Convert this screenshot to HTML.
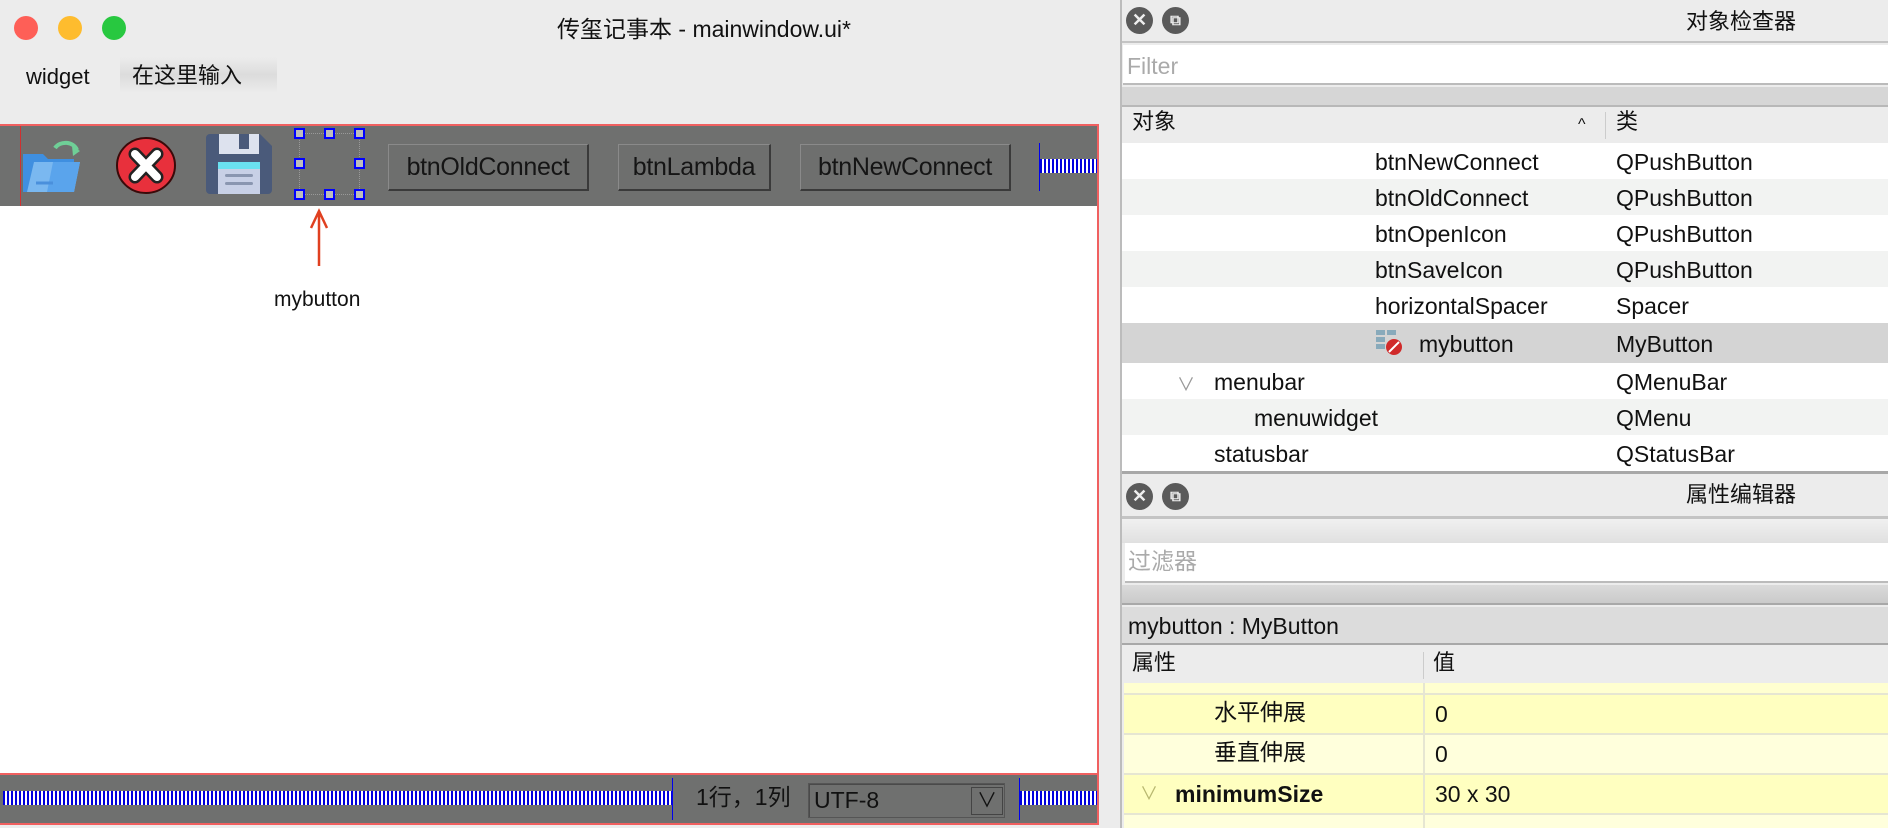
<!DOCTYPE html>
<html><head><meta charset="utf-8"><style>
*{margin:0;padding:0;box-sizing:border-box}
body{width:1888px;height:828px;overflow:hidden;background:#ececec;font-family:"Liberation Sans","Noto Sans CJK SC",sans-serif;color:#111;position:relative}
.a{position:absolute}
.t{position:absolute;font-size:22px;line-height:1;white-space:nowrap}
.btn{position:absolute;top:144px;height:47px;background:#6e6f6e;border-top:1px solid #8a8a8a;border-left:1px solid #8a8a8a;border-right:2px solid #3a3a3a;border-bottom:2px solid #3a3a3a;font-size:25px;display:flex;align-items:center;justify-content:center;color:#151515;letter-spacing:-0.3px}
.h{position:absolute;width:11px;height:11px;background:#bdbdbd;border:2px solid #0000ff}
.spr{position:absolute;height:14px;background:repeating-linear-gradient(90deg,#0000dd 0 2px,#fff 2px 4px)}
.row{position:absolute;left:1122px;width:766px;height:36px}
.row .n{position:absolute;font-size:23px;top:6px}
.row .c{position:absolute;left:494px;font-size:23px;top:6px}
.yr{position:absolute;left:1124px;width:764px;border-bottom:2px solid #e6e6d2}
.yr .n{position:absolute;font-size:23px;top:8px;line-height:1}
.yr .cj{position:absolute;font-size:23px;top:6px;line-height:1}
.yr .c{position:absolute;left:311px;font-size:23px;top:8px;line-height:1}
.ic{position:absolute;width:27px;height:27px;border-radius:50%;background:#5a5a5a;color:#eee;font-size:18px;font-weight:bold;display:flex;align-items:center;justify-content:center}
</style></head><body>
<div class="a" style="left:14px;top:16px;width:24px;height:24px;border-radius:50%;background:#fe5f57"></div>
<div class="a" style="left:58px;top:16px;width:24px;height:24px;border-radius:50%;background:#febc2e"></div>
<div class="a" style="left:102px;top:16px;width:24px;height:24px;border-radius:50%;background:#28c840"></div>
<div class="t" style="left:557px;top:18px;font-size:23px">传玺记事本 - mainwindow.ui*</div>
<div class="t" style="left:26px;top:66px">widget</div>
<div class="a" style="left:120px;top:57px;width:157px;height:36px;background:linear-gradient(#ececec,#dcdcdc 50%,#ececec)"></div>
<div class="t" style="left:132px;top:65px">在这里输入</div>
<div class="a" style="left:0;top:124px;width:1099px;height:2px;background:#f06060"></div>
<div class="a" style="left:0;top:126px;width:1098px;height:80px;background:#6f706f"></div>
<div class="a" style="left:20px;top:126px;width:1px;height:80px;background:#d03030"></div>
<div class="a" style="left:1097px;top:124px;width:2px;height:700px;background:#f06060"></div>
<div class="a" style="left:0;top:206px;width:1097px;height:567px;background:#fff"></div>
<svg class="a" style="left:20px;top:134px" width="70" height="62" viewBox="0 0 70 62">
<path d="M3 20h20l5 5h26v33H3z" fill="#3f8fe0"/>
<path d="M14 28h46l-6 30H7z" fill="#7ab8f0"/>
<path d="M33 28h27l-6 30H27z" fill="#5aa4ec"/>
<path d="M16 49h17" stroke="#4a90dc" stroke-width="3"/>
<path d="M35 14a12 10 0 0 1 22 2" fill="none" stroke="#6fcf97" stroke-width="4"/>
<path d="M52 12l8 5-7 5z" fill="#6fcf97"/>
</svg>
<svg class="a" style="left:116px;top:137px" width="60" height="57" viewBox="0 0 60 57">
<ellipse cx="30" cy="28.5" rx="29" ry="27.5" fill="#e8303c" stroke="#3a0a0a" stroke-width="2"/>
<path d="M19 17l22 23M41 17L19 40" stroke="#222" stroke-width="13" stroke-linecap="round"/>
<path d="M19 17l22 23M41 17L19 40" stroke="#fff" stroke-width="8" stroke-linecap="round"/>
</svg>
<svg class="a" style="left:206px;top:134px" width="66" height="60" viewBox="0 0 66 60">
<path d="M4 0h50l12 12v44a4 4 0 0 1-4 4H4a4 4 0 0 1-4-4V4a4 4 0 0 1 4-4z" fill="#4a5a7a"/>
<rect x="13" y="0" width="40" height="20" fill="#dde2ee"/>
<rect x="33" y="0" width="10" height="15" fill="#4a5a7a"/>
<rect x="12" y="28" width="42" height="32" fill="#c8d0e6"/>
<rect x="12" y="28" width="42" height="7" fill="#6ae0f0"/>
<rect x="19" y="40" width="28" height="3" rx="1.5" fill="#8a96b0"/>
<rect x="19" y="48" width="28" height="3" rx="1.5" fill="#8a96b0"/>
</svg>
<div class="a" style="left:299px;top:133px;width:61px;height:62px;border:1px dotted #999"></div>
<div class="h" style="left:294px;top:128px"></div><div class="h" style="left:324px;top:128px"></div><div class="h" style="left:354px;top:128px"></div>
<div class="h" style="left:294px;top:158px"></div><div class="h" style="left:354px;top:158px"></div>
<div class="h" style="left:294px;top:189px"></div><div class="h" style="left:324px;top:189px"></div><div class="h" style="left:354px;top:189px"></div>
<div class="btn" style="left:388px;width:201px">btnOldConnect</div>
<div class="btn" style="left:618px;width:153px">btnLambda</div>
<div class="btn" style="left:800px;width:211px">btnNewConnect</div>
<div class="a" style="left:1039px;top:143px;width:1px;height:48px;background:#0000ee"></div>
<div class="spr" style="left:1040px;top:159px;width:57px"></div>
<svg class="a" style="left:305px;top:208px" width="30" height="60"><path d="M14 58V4M6 20L14 3l8 17" fill="none" stroke="#e04020" stroke-width="2.5"/></svg>
<div class="t" style="left:274px;top:289px;font-size:21px">mybutton</div>
<div class="a" style="left:0;top:773px;width:1099px;height:2px;background:#f06060"></div>
<div class="a" style="left:0;top:775px;width:1097px;height:48px;background:#6f706f"></div>
<div class="a" style="left:0;top:823px;width:1099px;height:2px;background:#f06060"></div>
<div class="spr" style="left:3px;top:791px;width:670px"></div>
<div class="a" style="left:672px;top:778px;width:1px;height:42px;background:#0000ee"></div>
<div class="t" style="left:696px;top:786px;font-size:23px">1行，1列</div>
<div class="a" style="left:808px;top:783px;width:197px;height:35px;border:1px solid #555;box-shadow:inset 1px 1px 0 #4a4a4a"></div>
<div class="t" style="left:814px;top:789px;font-size:23px">UTF-8</div>
<div class="a" style="left:971px;top:787px;width:32px;height:28px;border:1px solid #444;font-size:20px;text-align:center;line-height:26px">∨</div>
<div class="a" style="left:1019px;top:778px;width:1px;height:42px;background:#0000ee"></div>
<div class="spr" style="left:1020px;top:791px;width:77px"></div>
<div class="a" style="left:1120px;top:0;width:2px;height:828px;background:#bcbcbc"></div>
<div class="ic" style="left:1126px;top:7px">✕</div>
<div class="ic" style="left:1162px;top:7px;font-size:15px">⧉</div>
<div class="t" style="left:1686px;top:11px">对象检查器</div>
<div class="a" style="left:1122px;top:41px;width:766px;height:2px;background:#c4c4c4"></div>
<div class="a" style="left:1123px;top:45px;width:765px;height:40px;background:#fff;border-bottom:2px solid #bbb"></div>
<div class="t" style="left:1127px;top:55px;color:#aaa;font-size:23px">Filter</div>
<div class="a" style="left:1122px;top:87px;width:766px;height:20px;background:#d6d6d6;border-bottom:2px solid #b8b8b8"></div>
<div class="a" style="left:1122px;top:107px;width:766px;height:36px;background:#ececec"></div>
<div class="t" style="left:1132px;top:111px">对象</div>
<div class="t" style="left:1578px;top:117px;font-size:16px">^</div>
<div class="a" style="left:1605px;top:112px;width:1px;height:27px;background:#ccc"></div>
<div class="t" style="left:1616px;top:111px">类</div>
<div class="row" style="top:143px;background:#fff"><span class="n" style="left:253px">btnNewConnect</span><span class="c">QPushButton</span></div>
<div class="row" style="top:179px;background:#f2f3f2"><span class="n" style="left:253px">btnOldConnect</span><span class="c">QPushButton</span></div>
<div class="row" style="top:215px;background:#fff"><span class="n" style="left:253px">btnOpenIcon</span><span class="c">QPushButton</span></div>
<div class="row" style="top:251px;background:#f2f3f2"><span class="n" style="left:253px">btnSaveIcon</span><span class="c">QPushButton</span></div>
<div class="row" style="top:287px;background:#fff"><span class="n" style="left:253px">horizontalSpacer</span><span class="c">Spacer</span></div>
<div class="row" style="top:323px;height:40px;background:#d4d4d4"><span class="n" style="left:297px;top:8px">mybutton</span><span class="c" style="top:8px">MyButton</span>
<svg style="position:absolute;left:253px;top:6px" width="30" height="28"><rect x="1" y="1" width="9" height="5" fill="#8ab"/><rect x="12" y="1" width="9" height="5" fill="#8ab"/><rect x="1" y="8" width="9" height="5" fill="#8ab"/><rect x="1" y="15" width="9" height="5" fill="#8ab"/><circle cx="19" cy="18" r="8" fill="#d02a2a"/><path d="M14 23l10-10" stroke="#fff" stroke-width="2"/></svg></div>
<div class="row" style="top:363px;background:#fff"><span class="n" style="left:55px;color:#999;font-size:18px;top:8px">∨</span><span class="n" style="left:92px">menubar</span><span class="c">QMenuBar</span></div>
<div class="row" style="top:399px;background:#f2f3f2"><span class="n" style="left:132px">menuwidget</span><span class="c">QMenu</span></div>
<div class="row" style="top:435px;background:#fff"><span class="n" style="left:92px">statusbar</span><span class="c">QStatusBar</span></div>
<div class="a" style="left:1122px;top:471px;width:766px;height:3px;background:#a8a8a8"></div>
<div class="ic" style="left:1126px;top:483px">✕</div>
<div class="ic" style="left:1162px;top:483px;font-size:15px">⧉</div>
<div class="t" style="left:1686px;top:484px">属性编辑器</div>
<div class="a" style="left:1122px;top:516px;width:766px;height:3px;background:#c4c4c4"></div>
<div class="a" style="left:1122px;top:519px;width:766px;height:24px;background:linear-gradient(#f0f0f0,#e0e0e0)"></div>
<div class="a" style="left:1125px;top:543px;width:763px;height:40px;background:#fff;border-bottom:2px solid #bbb"></div>
<div class="t" style="left:1128px;top:550px;color:#aaa;font-size:23px">过滤器</div>
<div class="a" style="left:1122px;top:585px;width:766px;height:20px;background:linear-gradient(#dadada,#cacaca);border-bottom:2px solid #a8a8a8"></div>
<div class="a" style="left:1122px;top:607px;width:766px;height:38px;background:#dcdcdc;border-bottom:2px solid #a8a8a8"></div>
<div class="t" style="left:1128px;top:615px;font-size:23px">mybutton : MyButton</div>
<div class="a" style="left:1122px;top:648px;width:766px;height:35px;background:#ececec"></div>
<div class="t" style="left:1132px;top:652px">属性</div>
<div class="a" style="left:1423px;top:652px;width:1px;height:27px;background:#ccc"></div>
<div class="t" style="left:1433px;top:652px">值</div>
<div class="yr" style="top:683px;height:12px;background:#ffffd0"></div>
<div class="yr" style="top:695px;height:40px;background:#ffffc0"><span class="cj" style="left:90px">水平伸展</span><span class="c">0</span></div>
<div class="yr" style="top:735px;height:40px;background:#ffffdc"><span class="cj" style="left:90px">垂直伸展</span><span class="c">0</span></div>
<div class="yr" style="top:775px;height:40px;background:#ffffc0"><span class="n" style="left:16px;color:#b8b870;font-size:18px;top:10px">∨</span><span class="n" style="left:51px;font-weight:bold">minimumSize</span><span class="c">30 x 30</span></div>
<div class="yr" style="top:815px;height:13px;background:#ffffdc;border:none"></div>
<div class="a" style="left:1423px;top:683px;width:2px;height:145px;background:#e6e6d2"></div>
</body></html>
